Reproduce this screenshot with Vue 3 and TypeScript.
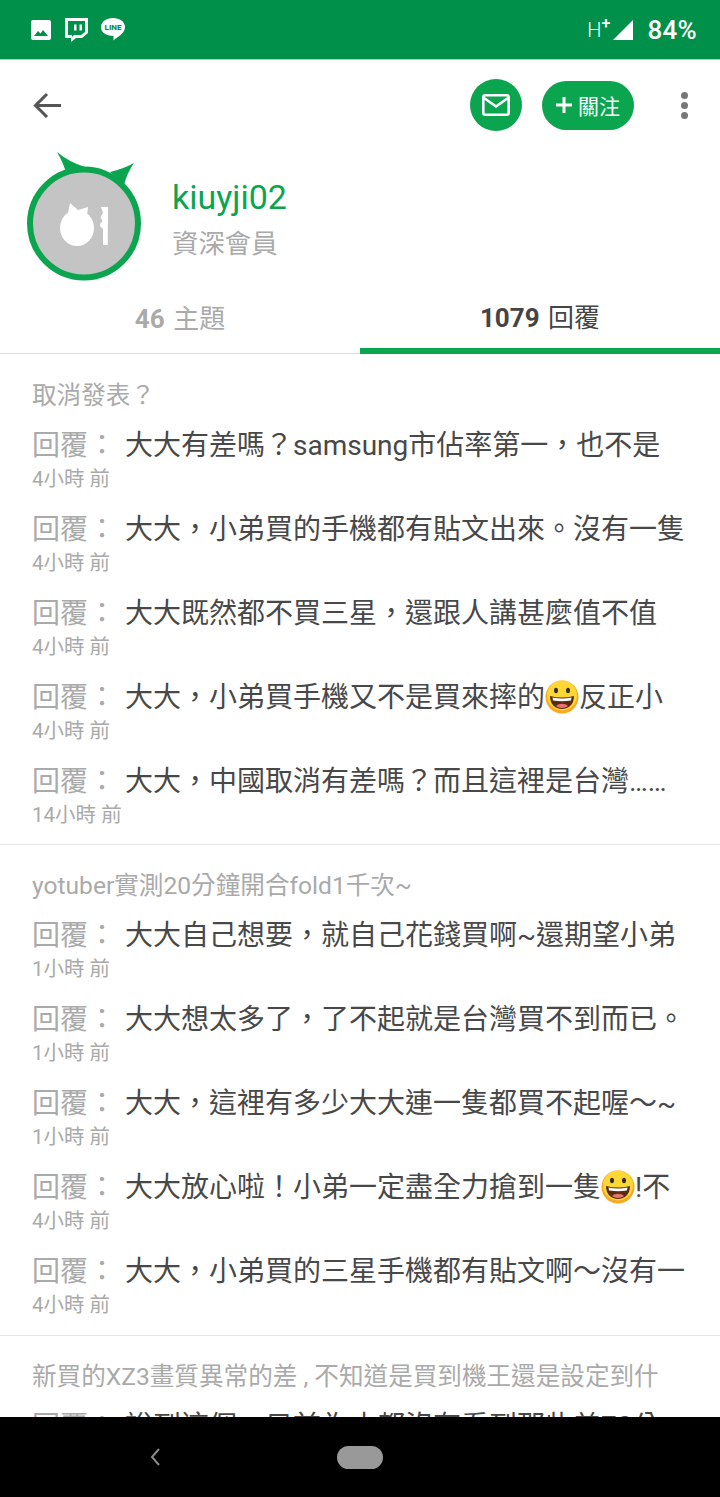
<script setup lang="ts">
import { ref } from 'vue'

interface Group {
  title: string
  rows: { text: string; time: string }[]
}

const activeTab = ref(1)

const tabs = [
  { count: '46', label: '主題' },
  { count: '1079', label: '回覆' }
]

const groups: Group[] = [
  {
    title: '取消發表？',
    rows: [
      { text: '大大有差嗎？samsung市佔率第一，也不是', time: '4小時 前' },
      { text: '大大，小弟買的手機都有貼文出來。沒有一隻', time: '4小時 前' },
      { text: '大大既然都不買三星，還跟人講甚麼值不值', time: '4小時 前' },
      { text: '大大，小弟買手機又不是買來摔的😀反正小', time: '4小時 前' },
      { text: '大大，中國取消有差嗎？而且這裡是台灣……', time: '14小時 前' }
    ]
  },
  {
    title: 'yotuber實測20分鐘開合fold1千次~',
    rows: [
      { text: '大大自己想要，就自己花錢買啊~還期望小弟', time: '1小時 前' },
      { text: '大大想太多了，了不起就是台灣買不到而已。', time: '1小時 前' },
      { text: '大大，這裡有多少大大連一隻都買不起喔～~', time: '1小時 前' },
      { text: '大大放心啦！小弟一定盡全力搶到一隻😀!不', time: '4小時 前' },
      { text: '大大，小弟買的三星手機都有貼文啊～沒有一', time: '4小時 前' }
    ]
  },
  {
    title: '新買的XZ3畫質異常的差 , 不知道是買到機王還是設定到什',
    rows: [{ text: '說到這個，目前為止都沒有看到那些差70分', time: '4小時 前' }]
  }
]
</script>

<template>
  <div class="phone">
    <div class="status">
      <div class="status-left">
        <svg width="20" height="20" viewBox="0 0 20 20">
          <path fill="#fff" d="M2 0h16a2 2 0 0 1 2 2v16a2 2 0 0 1-2 2H2a2 2 0 0 1-2-2V2a2 2 0 0 1 2-2z" />
          <path fill="#00904a" d="M3 16l4-5 2.500 2.500L12 10l5 6z" />
        </svg>
        <svg width="24" height="26" viewBox="0 0 24 26">
          <path fill="#fff" d="M1 1h23v15l-6 5h-6l-5 4v-4H1z" />
          <path fill="#00904a" d="M4 4h17v11l-4 3h-7l-2 2v-2H4z" />
          <path fill="#fff" d="M10 7.500h2.500v6H10zM15.500 7.500H18v6h-2.500z" />
        </svg>
        <svg width="24" height="23" viewBox="0 0 24 23">
          <path fill="#fff" d="M12 0c6.600 0 12 3.800 12 9 0 5-5 9-10 12l-1.500 1.500V18C5 18 0 14.500 0 9c0-5.200 5.400-9 12-9z" />
          <text x="12" y="12" class="line-text">LINE</text>
        </svg>
      </div>
      <div class="status-right">
        <span class="net">H<sup>+</sup></span>
        <svg width="20" height="20" viewBox="0 0 20 20"><path fill="#fff" d="M20 0v20H0z" /></svg>
        <span class="battery">84%</span>
      </div>
    </div>

    <div class="content">
      <div class="toolbar">
        <svg class="back" width="30" height="28" viewBox="0 0 30 28" fill="none" stroke="#555" stroke-width="3">
          <path d="M29 13.500H4M15 2 3.500 13.500 15 25" />
        </svg>
        <div class="actions">
          <div class="mail-btn">
            <svg width="28" height="22" viewBox="0 0 28 22" fill="none" stroke="#fff" stroke-width="2.600">
              <rect x="1.300" y="1.300" width="25.400" height="19.400" rx="2" />
              <path d="M2 4l12 8.500L26 4" />
            </svg>
          </div>
          <div class="follow-btn">
            <svg width="16" height="16" viewBox="0 0 16 16"><path fill="#fff" d="M6.500 0h3v6.500H16v3H9.500V16h-3V9.500H0v-3h6.500z" /></svg>
            <span>關注</span>
          </div>
          <div class="more">
            <i /><i /><i />
          </div>
        </div>
      </div>

      <div class="profile">
        <svg class="avatar" width="116" height="130" viewBox="0 0 116 130">
          <path fill="#0ba54f" d="M30 0Q42 10 58 15L40 24Q37 12 30 0z" />
          <path fill="#0ba54f" d="M107 11Q100 21 97 33L83 20Q96 17 107 11z" />
          <circle cx="57" cy="71.500" r="54" fill="#c4c4c4" stroke="#0ba54f" stroke-width="6" />
          <ellipse cx="50" cy="76" rx="17" ry="18" fill="#fff" />
          <path fill="#fff" d="M43 51l8 7-10 3zM61 55l-1 9-9-6z" />
          <path fill="#fff" d="M74 55h7v16l-.2 2v20H76V77l-3-3 .5-3 2-1.500-2-4.500 2.500-4z" />
        </svg>
        <div class="who">
          <div class="name">kiuyji02</div>
          <div class="role">資深會員</div>
        </div>
      </div>

      <div class="tabs">
        <div v-for="(t, i) in tabs" :key="t.label" class="tab" :class="{ active: i === activeTab }">
          <span><b>{{ t.count }}</b> {{ t.label }}</span>
        </div>
      </div>

      <div v-for="g in groups" :key="g.title" class="group">
        <div class="title">{{ g.title }}</div>
        <div v-for="r in g.rows" :key="r.text" class="row">
          <div class="reply">
            <span class="label">回覆：</span>
            <span class="text">
              <template v-for="(part, n) in r.text.split('😀')" :key="n">
                <svg v-if="n > 0" class="emoji" width="34" height="34" viewBox="0 0 34 34">
                  <circle cx="17" cy="17" r="16.500" fill="#f9a825" />
                  <circle cx="17" cy="15.500" r="15" fill="#fdd835" />
                  <ellipse cx="11" cy="10.500" rx="2" ry="2.800" fill="#3a2c1a" />
                  <ellipse cx="23" cy="10.500" rx="2" ry="2.800" fill="#3a2c1a" />
                  <path fill="#5b2a12" d="M5 16c8 2 16 2 24 0 0 8-5 13-12 13S5 24 5 16z" />
                  <path fill="#fff" d="M7.500 17.500c6 1.200 13 1.200 19 0l-.5 3c-6 1-12 1-18 0z" />
                  <path fill="#e57373" d="M11 26c3-3 9-3 12 0-3 2.500-9 2.500-12 0z" />
                </svg>{{ part }}
              </template>
            </span>
          </div>
          <div class="time">{{ r.time }}</div>
        </div>
      </div>
    </div>

    <div class="nav">
      <svg width="12" height="20" viewBox="0 0 12 20" fill="none" stroke="#8a8a8a" stroke-width="2">
        <path d="M10 2 3 10l7 8" />
      </svg>
      <div class="home" />
    </div>
  </div>
</template>

<style scoped>
.phone {
  width: 720px;
  height: 1497px;
  display: flex;
  flex-direction: column;
  overflow: hidden;
  background: #fff;
  font-family: Roboto, "Noto Sans CJK TC", sans-serif;
}

.status {
  height: 59px;
  flex: none;
  display: flex;
  align-items: center;
  justify-content: space-between;
  padding: 0 23px 0 31px;
  background: #00904a;
  border-bottom: 1px solid #a5d6b8;
  box-sizing: content-box;
}

.status-left {
  display: flex;
  align-items: center;
  gap: 13px;
}

.line-text {
  font: 800 8px Roboto, sans-serif;
  fill: #00904a;
  text-anchor: middle;
}

.status-right {
  display: flex;
  align-items: center;
  color: #fff;
}

.net {
  font-size: 20px;
  margin-right: 3px;
  font-weight: 300;
}

.net sup {
  font-size: 16px;
  line-height: 0;
  font-weight: 500;
}

.battery {
  margin-left: 14px;
  font-size: 26px;
  font-weight: 500;
  letter-spacing: 0.3px;
}

.content {
  flex: 1;
  min-height: 0;
  overflow: hidden;
}

.toolbar {
  height: 90px;
  display: flex;
  align-items: center;
  justify-content: space-between;
  padding: 2px 32px 0;
  box-sizing: border-box;
}

.actions {
  display: flex;
  align-items: center;
  margin-top: -2px;
}

.mail-btn {
  width: 52px;
  height: 52px;
  border-radius: 50%;
  background: #0ba54f;
  display: flex;
  align-items: center;
  justify-content: center;
}

.follow-btn {
  width: 92px;
  height: 49px;
  margin-left: 20px;
  border-radius: 25px;
  background: #0ba54f;
  color: #fff;
  font-size: 21px;
  display: flex;
  align-items: center;
  justify-content: center;
  gap: 6px;
}

.more {
  width: 7px;
  margin-left: 47px;
  display: flex;
  flex-direction: column;
  gap: 3px;
}

.more i {
  width: 7px;
  height: 7px;
  border-radius: 50%;
  background: #777;
}

.profile {
  height: 136px;
  display: flex;
  padding-left: 27px;
}

.avatar {
  flex: none;
  margin-top: 2px;
}

.who {
  margin-left: 29px;
  padding-top: 24px;
}

.name {
  font-size: 34px;
  line-height: 46px;
  color: #0ba54f;
}

.role {
  font-size: 26.400px;
  line-height: 46px;
  margin-top: 1px;
  color: #aaa;
}

.tabs {
  height: 68px;
  display: flex;
  border-bottom: 1px solid #ddd;
  box-sizing: border-box;
}

.tab {
  flex: 1;
  display: flex;
  align-items: center;
  justify-content: center;
  font-size: 26px;
  line-height: 36px;
  color: #aaa;
  box-sizing: border-box;
  padding-bottom: 1px;
}

.tab span {
  word-spacing: 2px;
}

.tab b {
  font-weight: 700;
}

.tab.active {
  color: #444;
  border-bottom: 6px solid #0ba54f;
  margin-bottom: -1px;
  padding-top: 2px;
  padding-bottom: 0;
}

.group {
  padding: 24px 0 18px 32px;
  border-bottom: 1px solid #e6e6e6;
}

.tabs + .group {
  padding-top: 25px;
  padding-bottom: 17px;
}

.title {
  font-size: 24.600px;
  line-height: 34px;
  color: #aaa;
  white-space: nowrap;
  margin-bottom: 12px;
}

.row + .row {
  margin-top: 18px;
}

.reply {
  display: flex;
  height: 42px;
  line-height: 42px;
  font-size: 28px;
  white-space: nowrap;
}

.label {
  width: 93px;
  flex: none;
  color: #aaa;
}

.text {
  color: #484848;
}

.emoji {
  vertical-align: -7px;
}

.time {
  font-size: 20.500px;
  line-height: 24px;
  color: #aaa;
}

.nav {
  height: 80px;
  flex: none;
  background: #000;
  display: flex;
  align-items: center;
  padding-left: 149px;
}

.home {
  width: 46px;
  height: 23px;
  margin-left: 176px;
  border-radius: 12px;
  background: #999;
}
</style>
